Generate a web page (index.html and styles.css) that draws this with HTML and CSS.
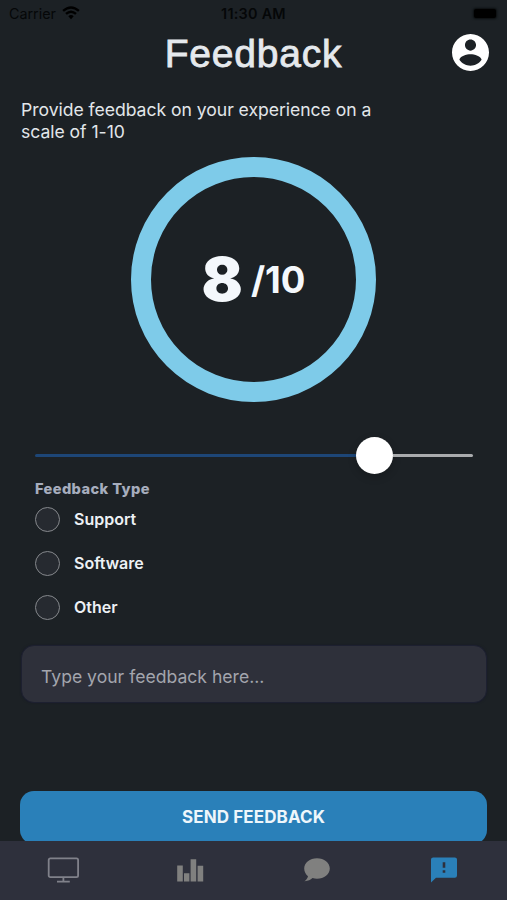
FILE: index.html
```html
<!DOCTYPE html>
<html lang="en">
<head>
<meta charset="utf-8">
<meta name="viewport" content="width=device-width, initial-scale=1">
<title>Feedback</title>
<link rel="stylesheet" href="styles.css">
</head>
<body>
<div class="app">
  <div class="status">
    <div class="carrier"><span>Carrier</span>
      <svg width="18" height="14" viewBox="0 0 18 14"><path d="M9 13.2 6.3 10.2Q9 8 11.7 10.2Z" fill="#000"/><path d="M4 7.9Q9 3.4 14 7.9M1.1 4.9Q9-2 16.9 4.9" fill="none" stroke="#000" stroke-width="2.4"/></svg>
    </div>
    <time class="clock">11:30 AM</time>
    <span class="battery"></span>
  </div>
  <header class="header">
    <h1>Feedback</h1>
    <button class="profile" aria-label="Profile">
      <svg viewBox="2 2 20 20" width="37" height="37"><path fill="#fff" d="M12 2C6.48 2 2 6.48 2 12s4.48 10 10 10 10-4.48 10-10S17.52 2 12 2zm0 3c1.66 0 3 1.34 3 3s-1.34 3-3 3-3-1.34-3-3 1.34-3 3-3zm0 14.2c-2.5 0-4.71-1.28-6-3.22.03-1.99 4-3.08 6-3.08 1.99 0 5.97 1.09 6 3.08-1.29 1.94-3.5 3.22-6 3.22z"/></svg>
    </button>
  </header>
  <main class="content">
    <p class="intro">Provide feedback on your experience on a scale of 1-10</p>
    <div class="ring"><span class="score">8</span><span class="total">/10</span></div>
    <div class="slider"><span class="filled"></span><span class="thumb"></span><span class="rest"></span></div>
    <section class="types">
      <h2>Feedback Type</h2>
      <div class="option"><span class="radio"></span><span>Support</span></div>
      <div class="option"><span class="radio"></span><span>Software</span></div>
      <div class="option"><span class="radio"></span><span>Other</span></div>
    </section>
    <div class="field"><span>Type your feedback here...</span></div>
    <button class="send"><span>SEND FEEDBACK</span></button>
  </main>
  <nav class="tabs">
    <div class="tab"><svg width="32" height="27" viewBox="0 0 32 27"><g fill="none" stroke="#80818a" stroke-width="1.8"><rect x="1.7" y="1.3" width="29.4" height="18.8" rx="1.6"/><path d="M16.4 20v4.6M10 24.7h12.8"/></g></svg></div>
    <div class="tab"><svg width="28" height="27" viewBox="0 0 28 27"><path fill="#80807f" d="M1.2 8.5h5.6v15.9H1.2zM8 16.2h5.4v8.2H8zM14.6 2.2h5.6v22.2h-5.6zM21.6 8.7H27.2v15.7h-5.6z"/></svg></div>
    <div class="tab"><svg width="28" height="27" viewBox="0 0 28 27"><path fill="#80807f" d="M14 1.3C6.8 1.3 1.2 5.8 1.2 11.5c0 3.2 1.5 5.8 3.8 7.7-.5 2-1.7 3.6-3.5 5 3.3.1 6-1.4 8-3.1 1.4.4 2.9.6 4.5.6 7.2 0 12.8-4.5 12.8-10.2S21.2 1.3 14 1.3z"/></svg></div>
    <div class="tab"><svg width="28" height="27" viewBox="0 0 28 27"><path fill="#2a80b9" d="M3.2.4h21.6A2.2 2.2 0 0 1 27 2.6v16a2.2 2.2 0 0 1-2.2 2.2H6L1 25.4V2.6A2.2 2.2 0 0 1 3.2.4z"/><path fill="#2e303c" d="M12.7 5.3h2.6v5.4h-2.6zM12.7 13.2h2.6v2.6h-2.6z"/></svg></div>
  </nav>
</div>
</body>
</html>
```
FILE: styles.css
```css
* { box-sizing: border-box; }
body { margin: 0; background: #1c2125; font-family: Inter, "Liberation Sans", sans-serif; }
h1, h2, p { margin: 0; }
button { border: 0; padding: 0; background: none; font: inherit; }
svg { display: block; }
.app { width: 507px; height: 900px; display: flex; flex-direction: column; overflow: hidden; }
.status { height: 28px; flex: none; display: grid; grid-template-columns: 1fr auto 1fr; align-items: center; padding: 0 11px 2px 9px; font-size: 14.3px; color: #050708; }
.carrier { display: flex; align-items: center; gap: 6px; }
.carrier svg { margin-top: -1px; }
.clock { font-weight: 600; font-size: 14.4px; letter-spacing: .25px; padding-left: 2px; }
.battery { justify-self: end; width: 22px; height: 9px; border-radius: 2px; background: #000; box-shadow: 0 0 2px 1px #0b0e10; }
.header { height: 62px; flex: none; display: grid; grid-template-columns: 37px 1fr 37px; padding: 6px 18px 0; }
h1 { grid-column: 2; text-align: center; font: 400 39px/40px "Liberation Sans", sans-serif; letter-spacing: .8px; color: #e5e9ed; -webkit-text-stroke: .8px #e5e9ed; }
.profile { height: 37px; }
.content { flex: 1; min-height: 0; display: flex; flex-direction: column; padding: 9px 20px 0; overflow: hidden; }
.intro { width: 370px; height: 58px; padding-left: 1px; font-size: 17.6px; line-height: 22px; letter-spacing: -.04px; color: #e2e6ea; flex: none; }
.ring { flex: none; align-self: center; width: 245px; height: 245px; border: 20px solid #7ecbe9; border-radius: 50%; display: flex; align-items: center; justify-content: center; gap: 8px; color: #f4f8fc; }
.score { font-size: 61px; line-height: 61px; font-weight: 900; }
.total { font-size: 36.5px; line-height: 36px; font-weight: 750; }
.slider { flex: none; height: 38px; margin: 34px 14px 0 15px; display: flex; align-items: center; }
.filled { width: 321px; height: 3px; background: #1d4677; border-radius: 2px 0 0 2px; }
.thumb { width: 37px; height: 37px; border-radius: 50%; background: #fff; box-shadow: 0 3px 8px #0003; }
.rest { flex: 1; height: 3px; background: #a9abad; border-radius: 0 2px 2px 0; }
.types { flex: none; padding: 5px 0 0 15px; height: 171px; }
h2 { height: 20px; font-size: 14.6px; line-height: 20px; font-weight: 800; letter-spacing: .4px; color: #a6adbd; }
.option { height: 44px; padding-bottom: 4px; display: flex; align-items: center; gap: 14px; font-size: 16px; font-weight: 600; color: #edf1f5; }
.radio { width: 25px; height: 25px; border: 1.5px solid #85888c; border-radius: 50%; background: #262a30; }
.field { flex: none; height: 58px; margin: 0 0 0 1px; padding: 4px 19px 0; display: flex; align-items: center; border: 1px solid #1d2030; border-radius: 13px; background: #2e303a; color: #a3a5ad; font-size: 17.6px; box-shadow: 0 0 2px #171a28; }
.send { flex: none; height: 53px; margin-top: 88px; padding-bottom: 2px; border-radius: 14px; background: #2a80b9; color: #eef6fb; font-size: 17px; font-weight: 650; letter-spacing: .1px; }
.tabs { height: 59px; flex: none; display: grid; grid-template-columns: repeat(4, 1fr); padding-top: 16px; background: #2e303c; }
.tab { display: flex; justify-content: center; }
```
